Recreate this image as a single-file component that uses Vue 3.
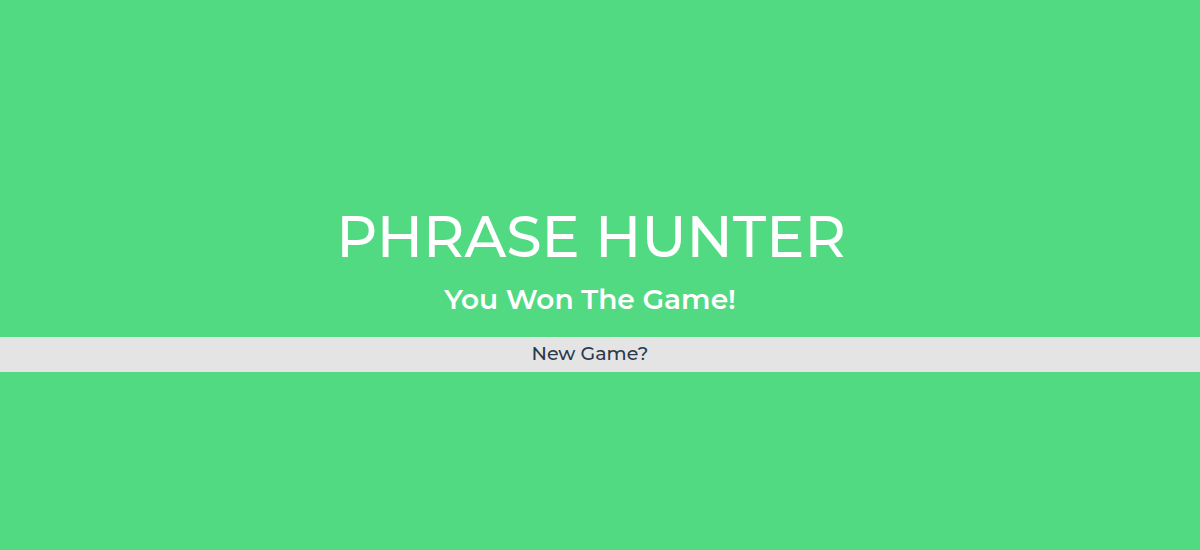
<script setup>
import { ref } from 'vue'

const title = ref('PHRASE HUNTER')
const message = ref('You Won The Game!')
</script>

<template>
  <main class="overlay">
    <h1 class="title">{{ title }}</h1>
    <h2 class="message">{{ message }}</h2>
    <button class="reset" type="button">New Game?</button>
  </main>
</template>

<style>
body {
  margin: 0;
  background: #52da83;
}
</style>

<style scoped>
.overlay {
  box-sizing: border-box;
  min-height: 100vh;
  display: flex;
  flex-direction: column;
  justify-content: center;
  padding-top: 22px;
  background: #52da83;
  color: #fff;
  font-family: Montserrat, Inter, sans-serif;
  text-align: center;
}

.title {
  margin: 0;
  padding-right: 18px;
  font-size: 57px;
  line-height: 72px;
  font-weight: 500;
}

.message {
  margin: 8px 0 20px;
  padding-right: 20px;
  font-size: 28px;
  line-height: 36px;
  font-weight: 600;
}

.reset {
  width: 100%;
  height: 35px;
  padding: 0 20px 0 0;
  border: 0;
  background: #e4e4e4;
  color: #2b3a4b;
  font: 500 19px/34px Montserrat, Inter, sans-serif;
  cursor: pointer;
}
</style>
